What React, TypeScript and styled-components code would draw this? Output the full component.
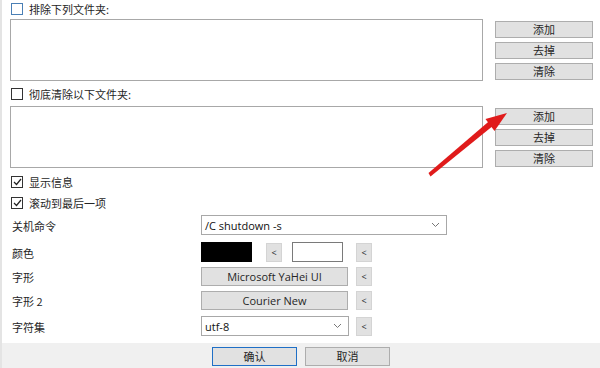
import React from 'react';
import styled, { createGlobalStyle } from 'styled-components';

const GlobalStyle = createGlobalStyle`
  html, body {
    margin: 0;
    padding: 0;
    background: #fff;
  }
  body {
    font-family: "Noto Sans CJK SC", "Noto Sans", sans-serif;
    font-size: 11px;
    color: #262626;
  }
`;

const Window = styled.div`
  position: relative;
  width: 600px;
  height: 368px;
  overflow: hidden;
  display: flex;
  flex-direction: column;
  border-left: 2px solid #e4e4e4;
  box-sizing: border-box;
`;

const Main = styled.div`
  flex: 1;
  padding: 1px 7px 0 8px;
  display: flex;
  flex-direction: column;
`;

const CheckRow = styled.label<{ $gap?: number }>`
  display: flex;
  align-items: center;
  gap: 6px;
  height: 16px;
  margin-top: ${(p) => p.$gap ?? 0}px;
  line-height: 1;
`;

const Box = styled.span<{ $focus?: boolean }>`
  width: 10px;
  height: 10px;
  margin-left: 1px;
  border: 1px solid ${(p) => (p.$focus ? '#4a7fb5' : '#333')};
  background: #fff;
  display: inline-flex;
  align-items: center;
  justify-content: center;
`;

const ListRow = styled.div<{ $gap: number }>`
  display: flex;
  gap: 12px;
  margin-top: ${(p) => p.$gap}px;
`;

const ListBox = styled.div`
  width: 471px;
  height: 60px;
  border: 1px solid #a8a8a8;
  background: #fff;
`;

const ButtonCol = styled.div`
  display: flex;
  flex-direction: column;
  gap: 4px;
  padding-top: 2px;
`;

const Btn = styled.button<{ $w?: number; $h?: number; $primary?: boolean }>`
  width: ${(p) => p.$w ?? 98}px;
  height: ${(p) => p.$h ?? 17}px;
  box-sizing: border-box;
  padding: 0;
  background: #e1e1e1;
  border: 1px solid ${(p) => (p.$primary ? '#1f6fc6' : '#adadad')};
  font-family: "Noto Sans CJK SC", "Noto Sans", sans-serif;
  font-size: 11px;
  color: #262626;
  line-height: 1;
  display: inline-flex;
  align-items: center;
  justify-content: center;
`;

const FormRow = styled.div<{ $gap: number }>`
  display: grid;
  grid-template-columns: 191px 1fr;
  height: 20px;
  align-items: center;
  margin-top: ${(p) => p.$gap}px;
`;

const Label = styled.div`
  padding-left: 2px;
  padding-top: 2px;
`;

const Controls = styled.div`
  display: flex;
  align-items: center;
`;

const Select = styled.div<{ $w: number }>`
  width: ${(p) => p.$w}px;
  height: 20px;
  box-sizing: border-box;
  border: 1px solid #a8a8a8;
  background: #fff;
  display: flex;
  align-items: center;
  justify-content: space-between;
  padding: 0 6px 0 3px;
  font-family: "Open Sans", "Noto Sans", sans-serif;
  font-size: 11px;
  color: #111;
`;

const Swatch = styled.div<{ $color: string; $ml?: number }>`
  width: 51px;
  height: 20px;
  box-sizing: border-box;
  margin-left: ${(p) => p.$ml ?? 0}px;
  background: ${(p) => p.$color};
  border: 1px solid ${(p) => (p.$color === '#000' ? '#000' : '#7a7a7a')};
`;

const Small = styled(Btn)<{ $ml: number }>`
  width: 16px;
  height: 19px;
  margin-left: ${(p) => p.$ml}px;
  font-family: "Open Sans", sans-serif;
  font-size: 9px;
  border-color: #d4d4d4;
`;

const Wide = styled(Btn)`
  width: 147px;
  height: 19px;
  font-family: "Open Sans", "Noto Sans", sans-serif;
  font-size: 11px;
`;

const Footer = styled.div`
  height: 25px;
  background: #f0f0f0;
  display: flex;
  align-items: center;
  gap: 8px;
  padding-left: 210px;
  padding-top: 2px;
  box-sizing: border-box;
`;

const Arrow = styled.svg`
  position: absolute;
  left: 0;
  top: 0;
  pointer-events: none;
`;

const Chevron = () => (
  <svg width="9" height="6" viewBox="0 0 9 6">
    <path d="M1 1l3.5 3.5L8 1" fill="none" stroke="#777" strokeWidth="1" />
  </svg>
);

const Tick = () => (
  <svg width="9" height="8" viewBox="0 0 9 8">
    <path d="M1 4l2.5 2.5L8 1" fill="none" stroke="#222" strokeWidth="1.2" />
  </svg>
);

const App: React.FC = () => (
  <>
    <GlobalStyle />
    <Window>
      <Main>
        <CheckRow>
          <Box $focus />
          排除下列文件夹:
        </CheckRow>
        <ListRow $gap={2}>
          <ListBox />
          <ButtonCol>
            <Btn>添加</Btn>
            <Btn>去掉</Btn>
            <Btn>清除</Btn>
          </ButtonCol>
        </ListRow>
        <CheckRow $gap={5}>
          <Box />
          彻底清除以下文件夹:
        </CheckRow>
        <ListRow $gap={4}>
          <ListBox />
          <ButtonCol>
            <Btn>添加</Btn>
            <Btn>去掉</Btn>
            <Btn>清除</Btn>
          </ButtonCol>
        </ListRow>
        <CheckRow $gap={6}>
          <Box>
            <Tick />
          </Box>
          显示信息
        </CheckRow>
        <CheckRow $gap={5}>
          <Box>
            <Tick />
          </Box>
          滚动到最后一项
        </CheckRow>
        <FormRow $gap={4}>
          <Label>关机命令</Label>
          <Controls>
            <Select $w={246}>
              /C shutdown -s
              <Chevron />
            </Select>
          </Controls>
        </FormRow>
        <FormRow $gap={7}>
          <Label>颜色</Label>
          <Controls>
            <Swatch $color="#000" />
            <Small $ml={14}>&lt;</Small>
            <Swatch $color="#fff" $ml={10} />
            <Small $ml={13}>&lt;</Small>
          </Controls>
        </FormRow>
        <FormRow $gap={4}>
          <Label>字形</Label>
          <Controls>
            <Wide>Microsoft YaHei UI</Wide>
            <Small $ml={8}>&lt;</Small>
          </Controls>
        </FormRow>
        <FormRow $gap={4}>
          <Label>字形 2</Label>
          <Controls>
            <Wide>Courier New</Wide>
            <Small $ml={8}>&lt;</Small>
          </Controls>
        </FormRow>
        <FormRow $gap={6}>
          <Label>字符集</Label>
          <Controls>
            <Select $w={148}>
              utf-8
              <Chevron />
            </Select>
            <Small $ml={7}>&lt;</Small>
          </Controls>
        </FormRow>
      </Main>
      <Footer>
        <Btn $w={85} $h={19} $primary>
          确认
        </Btn>
        <Btn $w={85} $h={19}>
          取消
        </Btn>
      </Footer>
      <Arrow width="600" height="368">
        <polygon points="426.5,173 428.5,176.5 492,125 488.5,120" fill="#e01b1b" />
        <path d="M505 113 L483.5 119 L492.5 131 Z" fill="#e01b1b" />
      </Arrow>
    </Window>
  </>
);

export default App;
